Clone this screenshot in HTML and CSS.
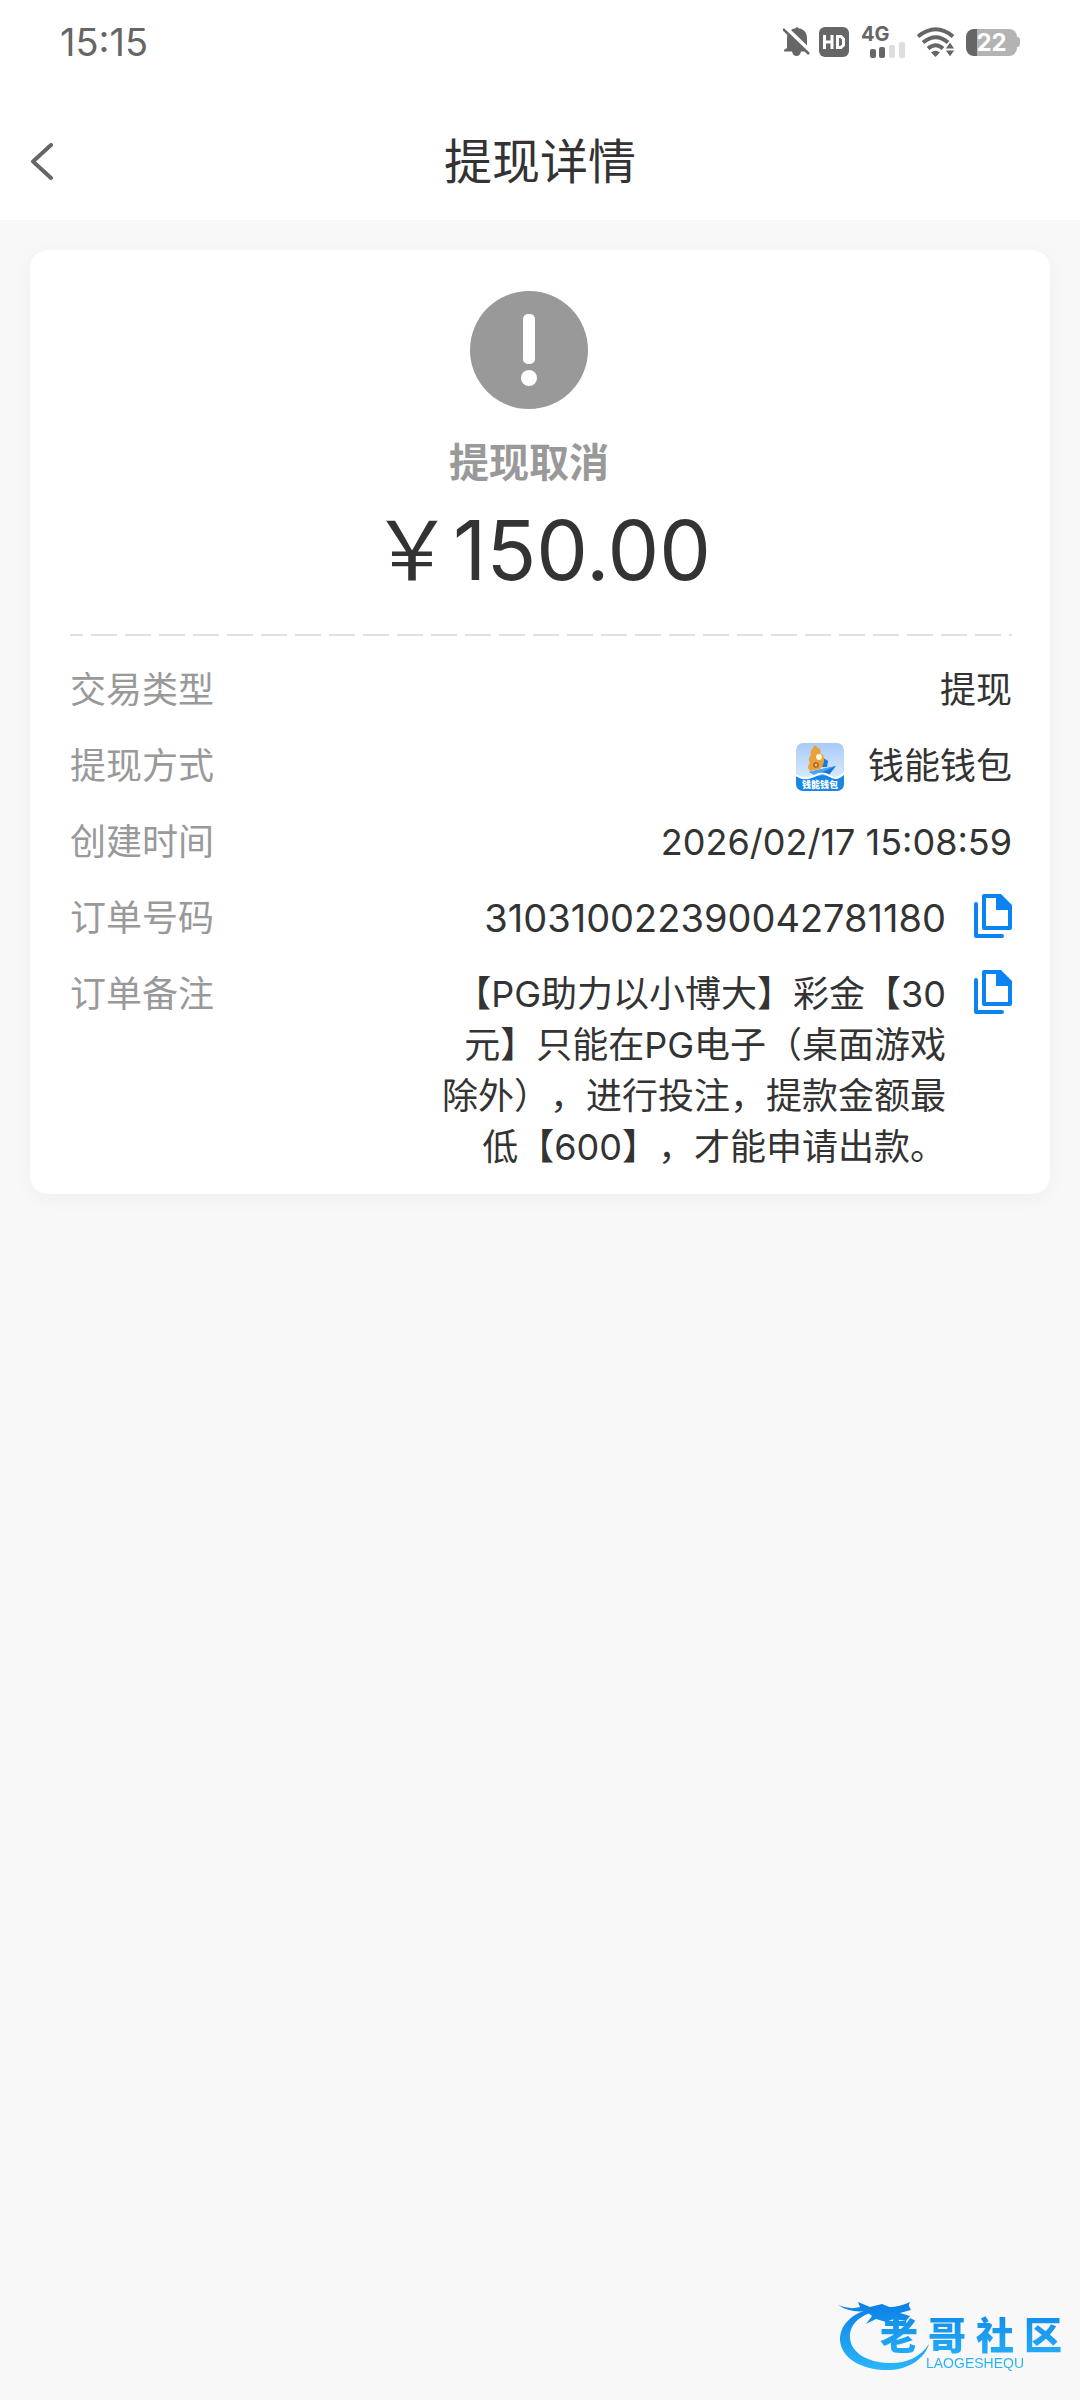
FILE: index.html
```html
<!DOCTYPE html>
<html lang="zh-CN">
<head>
    <meta charset="UTF-8">
    <meta name="viewport" content="width=device-width, initial-scale=1.0">
    <title>提现详情</title>
    <link rel="stylesheet" href="styles.css">
</head>
<body>
    <div class="statusbar">
        <span class="time">15:15</span>
        <div class="icons">
            <svg width="28" height="32" viewBox="0 0 28 32">
                <path fill="#666" d="M4 22V13C4 6 8 3 12 2.500Q14 0 16 2.500C21 3 24 7 24 12V22L26 25.500H18Q17 30 13.500 30T9 25.500H1V24Z"/>
                <path stroke="#fff" stroke-width="4" d="M2 1L28 26"/>
                <path stroke="#666" stroke-width="2.500" d="M0 3L26 28"/>
            </svg>
            <svg class="hd" width="30" height="30" viewBox="0 0 30 30">
                <rect width="30" height="30" rx="6" fill="#666"/>
                <path fill="none" stroke="#fff" stroke-width="3" d="M5.500 8V22M13 8V22M5.500 15H13M18.500 9.500H22L24.500 12V18L22 20.500H18.500Z"/>
            </svg>
            <div class="signal">
                <span>4G</span>
                <svg width="35" height="16" viewBox="0 0 35 16">
                    <rect x="0" y="7" width="6" height="9" rx="2" fill="#666"/>
                    <rect x="9" y="5" width="6" height="11" rx="2" fill="#666"/>
                    <rect x="19" y="3" width="6" height="13" rx="2" fill="#ddd"/>
                    <rect x="29" y="0" width="6" height="16" rx="2" fill="#ddd"/>
                </svg>
            </div>
            <svg class="wifi" width="38" height="30" viewBox="0 0 38 30">
                <g fill="none" stroke="#666" stroke-width="4">
                    <path d="M1 9.500Q19 -5 36 9.500"/>
                    <path d="M6 15.500Q19 5 31 15.500"/>
                    <path d="M11 21.500Q19 15 26 21.500"/>
                </g>
                <path fill="#666" d="M14 25.500Q18.500 22 23 25.500L18.500 30Z"/>
                <path fill="#666" stroke="#fff" stroke-width="1" d="M28 22L33 15L38 22ZM28 23H38L33 30Z"/>
            </svg>
            <div class="battery"><span>22</span></div>
            <div class="nub"></div>
        </div>
    </div>
    <header>
        <a href="#" class="back" aria-label="返回">
            <svg width="24" height="38" viewBox="0 0 24 38">
                <path fill="none" stroke="#666" stroke-width="4" stroke-linecap="round" stroke-linejoin="round" d="M21 2L3 18.500L21 35"/>
            </svg>
        </a>
        <h1>提现详情</h1>
    </header>
    <main class="card">
        <div class="status">
            <svg width="118" height="118" viewBox="0 0 118 118">
                <circle cx="59" cy="59" r="59" fill="#999"/>
                <rect x="53" y="23" width="12" height="50" rx="5" fill="#fff"/>
                <circle cx="59" cy="87" r="8" fill="#fff"/>
            </svg>
            <p>提现取消</p>
        </div>
        <div class="amount">￥150.00</div>
        <div class="dash"></div>
        <dl>
            <div class="row">
                <dt>交易类型</dt>
                <dd>提现</dd>
            </div>
            <div class="row">
                <dt>提现方式</dt>
                <dd class="wallet">
                    <svg width="48" height="48" viewBox="0 0 48 48">
                        <defs>
                            <clipPath id="round"><rect width="48" height="48" rx="7"/></clipPath>
                            <linearGradient id="sky" x1="0" y1="0" x2="0" y2="1">
                                <stop offset="0" stop-color="#a9cbf7"/>
                                <stop offset="1" stop-color="#eaf5ff"/>
                            </linearGradient>
                        </defs>
                        <g clip-path="url(#round)">
                            <rect width="48" height="48" fill="url(#sky)"/>
                            <path fill="#1878dc" d="M26 14L32 18L31 24H25Z"/>
                            <path fill="#e9a23b" d="M16 6L19 2L22 5Q26 6 24 10Q29 12 28 18Q28 22 24 26L14 28Q10 24 14 20Q11 16 15 12Q14 8 16 6Z"/>
                            <circle cx="23" cy="14" r="3" fill="#fff3d8"/>
                            <circle cx="20" cy="22" r="3" fill="#b96f28"/>
                            <circle cx="20" cy="22" r="1" fill="#ffe0a0"/>
                            <path fill="#1878dc" d="M13 29L40 23L33 32H20Z"/>
                            <path fill="#4aa6f0" d="M13 29L40 23L24 30L20 33Z"/>
                            <path fill="#1687e6" d="M0 33Q9 38 18 34T34 34T48 32V48H0Z"/>
                            <path fill="none" stroke="#fff" stroke-width="2" d="M0 32Q9 38 18 33T34 33T48 30"/>
                            <text x="24" y="45" class="wallet-name">钱能钱包</text>
                        </g>
                    </svg>
                    <span>钱能钱包</span>
                </dd>
            </div>
            <div class="row">
                <dt>创建时间</dt>
                <dd>2026/02/17 15:08:59</dd>
            </div>
            <div class="row">
                <dt>订单号码</dt>
                <dd class="number">310310022390042781180</dd>
                <button type="button" class="copy" aria-label="复制订单号码">
                    <svg width="38" height="44" viewBox="0 0 38 44">
                        <path fill="#0b84f3" fill-rule="evenodd" d="M10 0H27L38 11V34Q38 36 36 36H10Q8 36 8 34V2Q8 0 10 0ZM12 4V32H34V16H22V4Z"/>
                        <path fill="none" stroke="#0b84f3" stroke-width="4" stroke-linecap="round" stroke-linejoin="round" d="M2 10V42H28"/>
                    </svg>
                </button>
            </div>
            <div class="row">
                <dt>订单备注</dt>
                <dd>【PG助力以小博大】彩金【30元】只能在PG电子（桌面游戏除外），进行投注，提款金额最低【600】，才能申请出款。</dd>
                <button type="button" class="copy" aria-label="复制订单备注">
                    <svg width="38" height="44" viewBox="0 0 38 44">
                        <path fill="#0b84f3" fill-rule="evenodd" d="M10 0H27L38 11V34Q38 36 36 36H10Q8 36 8 34V2Q8 0 10 0ZM12 4V32H34V16H22V4Z"/>
                        <path fill="none" stroke="#0b84f3" stroke-width="4" stroke-linecap="round" stroke-linejoin="round" d="M2 10V42H28"/>
                    </svg>
                </button>
            </div>
        </dl>
    </main>
    <div class="watermark">
        <svg width="94" height="76" viewBox="0 0 94 76">
            <defs>
                <linearGradient id="blue" gradientUnits="userSpaceOnUse" x1="0" y1="0" x2="0" y2="76">
                    <stop offset="0.1" stop-color="#0b80e6"/>
                    <stop offset="1" stop-color="#2bb8fa"/>
                </linearGradient>
            </defs>
            <g fill="url(#blue)">
                <path d="M32 13C12 18 2 30 2 44C3 62 24 75 52 74C72 73 87 62 91 48C82 62 66 68 50 67C28 66 13 56 12 42C11 30 20 20 36 16Z"/>
                <path d="M0 9Q12 14 22 11L20 6L32 11L44 8L54 12L70 8L73 14L62 17L72 20L68 25L56 23L48 26L38 23L28 28L34 20L28 15Q12 17 0 9Z"/>
                <path d="M48 11Q60 12 72 6L70 11Q60 15 48 11Z"/>
            </g>
        </svg>
        <div class="mark">
            <p class="mark-name"><span>老</span><span>哥</span><span>社</span><span>区</span></p>
            <p class="mark-sub">LAOGESHEQU</p>
        </div>
    </div>
</body>
</html>
```
FILE: styles.css
```css
*{
    margin: 0;
    padding: 0;
    box-sizing: border-box;
}
body{
    position: relative;
    min-height: 100vh;
    background-color: #f8f8f8;
    color: #333;
    font-family: Inter, "Noto Sans CJK SC", sans-serif;
    font-size: 36px;
    line-height: 51px;
}
.statusbar{
    display: flex;
    justify-content: space-between;
    align-items: center;
    height: 84px;
    padding: 0 60px;
    background-color: white;
    color: #666;
}
.time, .number{
    font-size: 38px;
}
.icons{
    display: flex;
    align-items: center;
}
.hd{
    margin-left: 8px;
}
.signal{
    display: flex;
    flex-direction: column;
    margin-left: 12px;
}
.signal span{
    font-size: 20px;
    font-weight: 700;
    line-height: 16px;
}
.signal svg{
    margin-left: 9px;
}
.wifi{
    margin: 0 11px 0 12px;
}
.battery{
    width: 51px;
    height: 27px;
    border-radius: 8px;
    background: linear-gradient(to right, #666 11px, #b3b3b3 11px);
    color: white;
    font-size: 24px;
    font-weight: 700;
    line-height: 27px;
    text-align: center;
}
.nub{
    width: 3px;
    height: 10px;
    border-radius: 0 3px 3px 0;
    background-color: #b3b3b3;
}
header{
    display: grid;
    grid-template-columns: 60px 1fr 60px;
    align-items: center;
    height: 136px;
    padding: 20px 30px 0;
    background-color: white;
}
.back svg{
    display: block;
}
h1{
    font-size: 48px;
    font-weight: 400;
    line-height: 60px;
    text-align: center;
}
.card{
    margin: 30px;
    padding: 41px 38px 21px 40px;
    border-radius: 18px;
    background-color: white;
    box-shadow: 0 4px 20px rgba(0, 0, 0, 0.04);
}
.status{
    display: flex;
    flex-direction: column;
    align-items: center;
    gap: 24px;
    margin-right: 24px;
    color: #999;
    font-size: 40px;
    font-weight: 700;
    line-height: 60px;
}
.amount{
    font-size: 82px;
    line-height: 116px;
    text-align: center;
}
.dash{
    height: 2px;
    margin-top: 25px;
    background: repeating-linear-gradient(to right, #e0e0e0 0 13px, transparent 13px 21px, #e0e0e0 21px 34px);
}
dl{
    display: flex;
    flex-direction: column;
    gap: 25px;
    padding-top: 29px;
}
.row{
    display: flex;
    align-items: flex-start;
}
dt{
    color: #999;
}
dd{
    flex: 1;
    padding-left: 222px;
    text-align: right;
    text-spacing-trim: space-all;
}
.wallet{
    display: flex;
    justify-content: flex-end;
    align-items: center;
    gap: 24px;
}
.wallet-name{
    fill: white;
    font-size: 9px;
    font-weight: 900;
    text-anchor: middle;
}
.copy{
    margin: 1px 0 0 28px;
    border: none;
    background: none;
    cursor: pointer;
}
.copy svg{
    display: block;
}
.watermark{
    position: absolute;
    right: 18px;
    bottom: 28px;
    display: grid;
}
.watermark svg, .mark{
    grid-area: 1 / 1;
}
.mark{
    width: 182px;
    margin-left: 42px;
    padding-top: 20px;
    background: linear-gradient(#0b80e6, #2bb8fa);
    background-clip: text;
    color: transparent;
}
.mark-name{
    display: flex;
    justify-content: space-between;
    font-size: 38px;
    font-weight: 900;
    line-height: 38px;
}
.mark-sub{
    padding-left: 46px;
    font-family: "Liberation Sans", sans-serif;
    font-size: 14px;
    line-height: 18px;
}
```
